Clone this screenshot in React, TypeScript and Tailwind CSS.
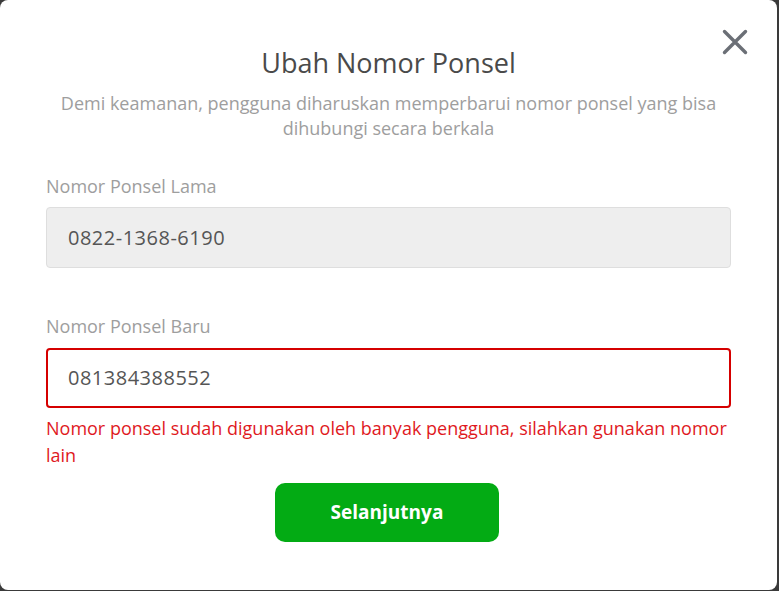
export default function App() {
  return (
    <div className="h-[591px] w-[779px] overflow-hidden bg-[#3a3a3a]">
      <div
        className="relative h-[590px] w-[777px] rounded-[8px] bg-white px-[46px] pt-[43px]"
        style={{ fontFamily: '"Open Sans", sans-serif' }}
      >
        <button className="absolute right-[29px] top-[29px] text-[#6b6f76]">
          <svg width="26" height="26" viewBox="0 0 26 26" fill="none">
            <path
              d="M2.5 2.5 L23.5 23.5 M23.5 2.5 L2.5 23.5"
              stroke="currentColor"
              strokeWidth="3.4"
              strokeLinecap="round"
            />
          </svg>
        </button>

        <h1 className="text-center text-[27px] leading-[40px] text-[#4a4a4a]">
          Ubah Nomor Ponsel
        </h1>
        <p className="mt-[8px] text-center text-[18px] leading-[25px] text-[#9e9e9e]">
          Demi keamanan, pengguna diharuskan memperbarui nomor ponsel yang bisa
          dihubungi secara berkala
        </p>

        <div className="mt-[33px]">
          <div className="text-[18px] leading-[24px] text-[#9e9e9e]">Nomor Ponsel Lama</div>
          <div className="mt-[9px] flex h-[61px] items-center rounded-[4px] border border-[#dedede] bg-[#eeeeee] px-[21px] text-[20px] tracking-[0.5px] text-[#555555]">
            0822-1368-6190
          </div>
        </div>

        <div className="mt-[46px]">
          <div className="text-[18px] leading-[24px] text-[#9e9e9e]">Nomor Ponsel Baru</div>
          <div className="mt-[10px] flex h-[60px] items-center rounded-[4px] border-2 border-[#d50000] bg-white px-[20px] text-[20px] tracking-[0.5px] text-[#555555]">
            081384388552
          </div>
          <p className="mt-[7px] text-[18px] leading-[27px] text-[#e0191e]">
            Nomor ponsel sudah digunakan oleh banyak pengguna, silahkan gunakan nomor lain
          </p>
        </div>

        <div className="mt-[14px] flex justify-center pr-[3px]">
          <button className="h-[59px] w-[224px] rounded-[10px] bg-[#03ab14] text-[19px] font-bold text-white">
            Selanjutnya
          </button>
        </div>
      </div>
    </div>
  );
}
